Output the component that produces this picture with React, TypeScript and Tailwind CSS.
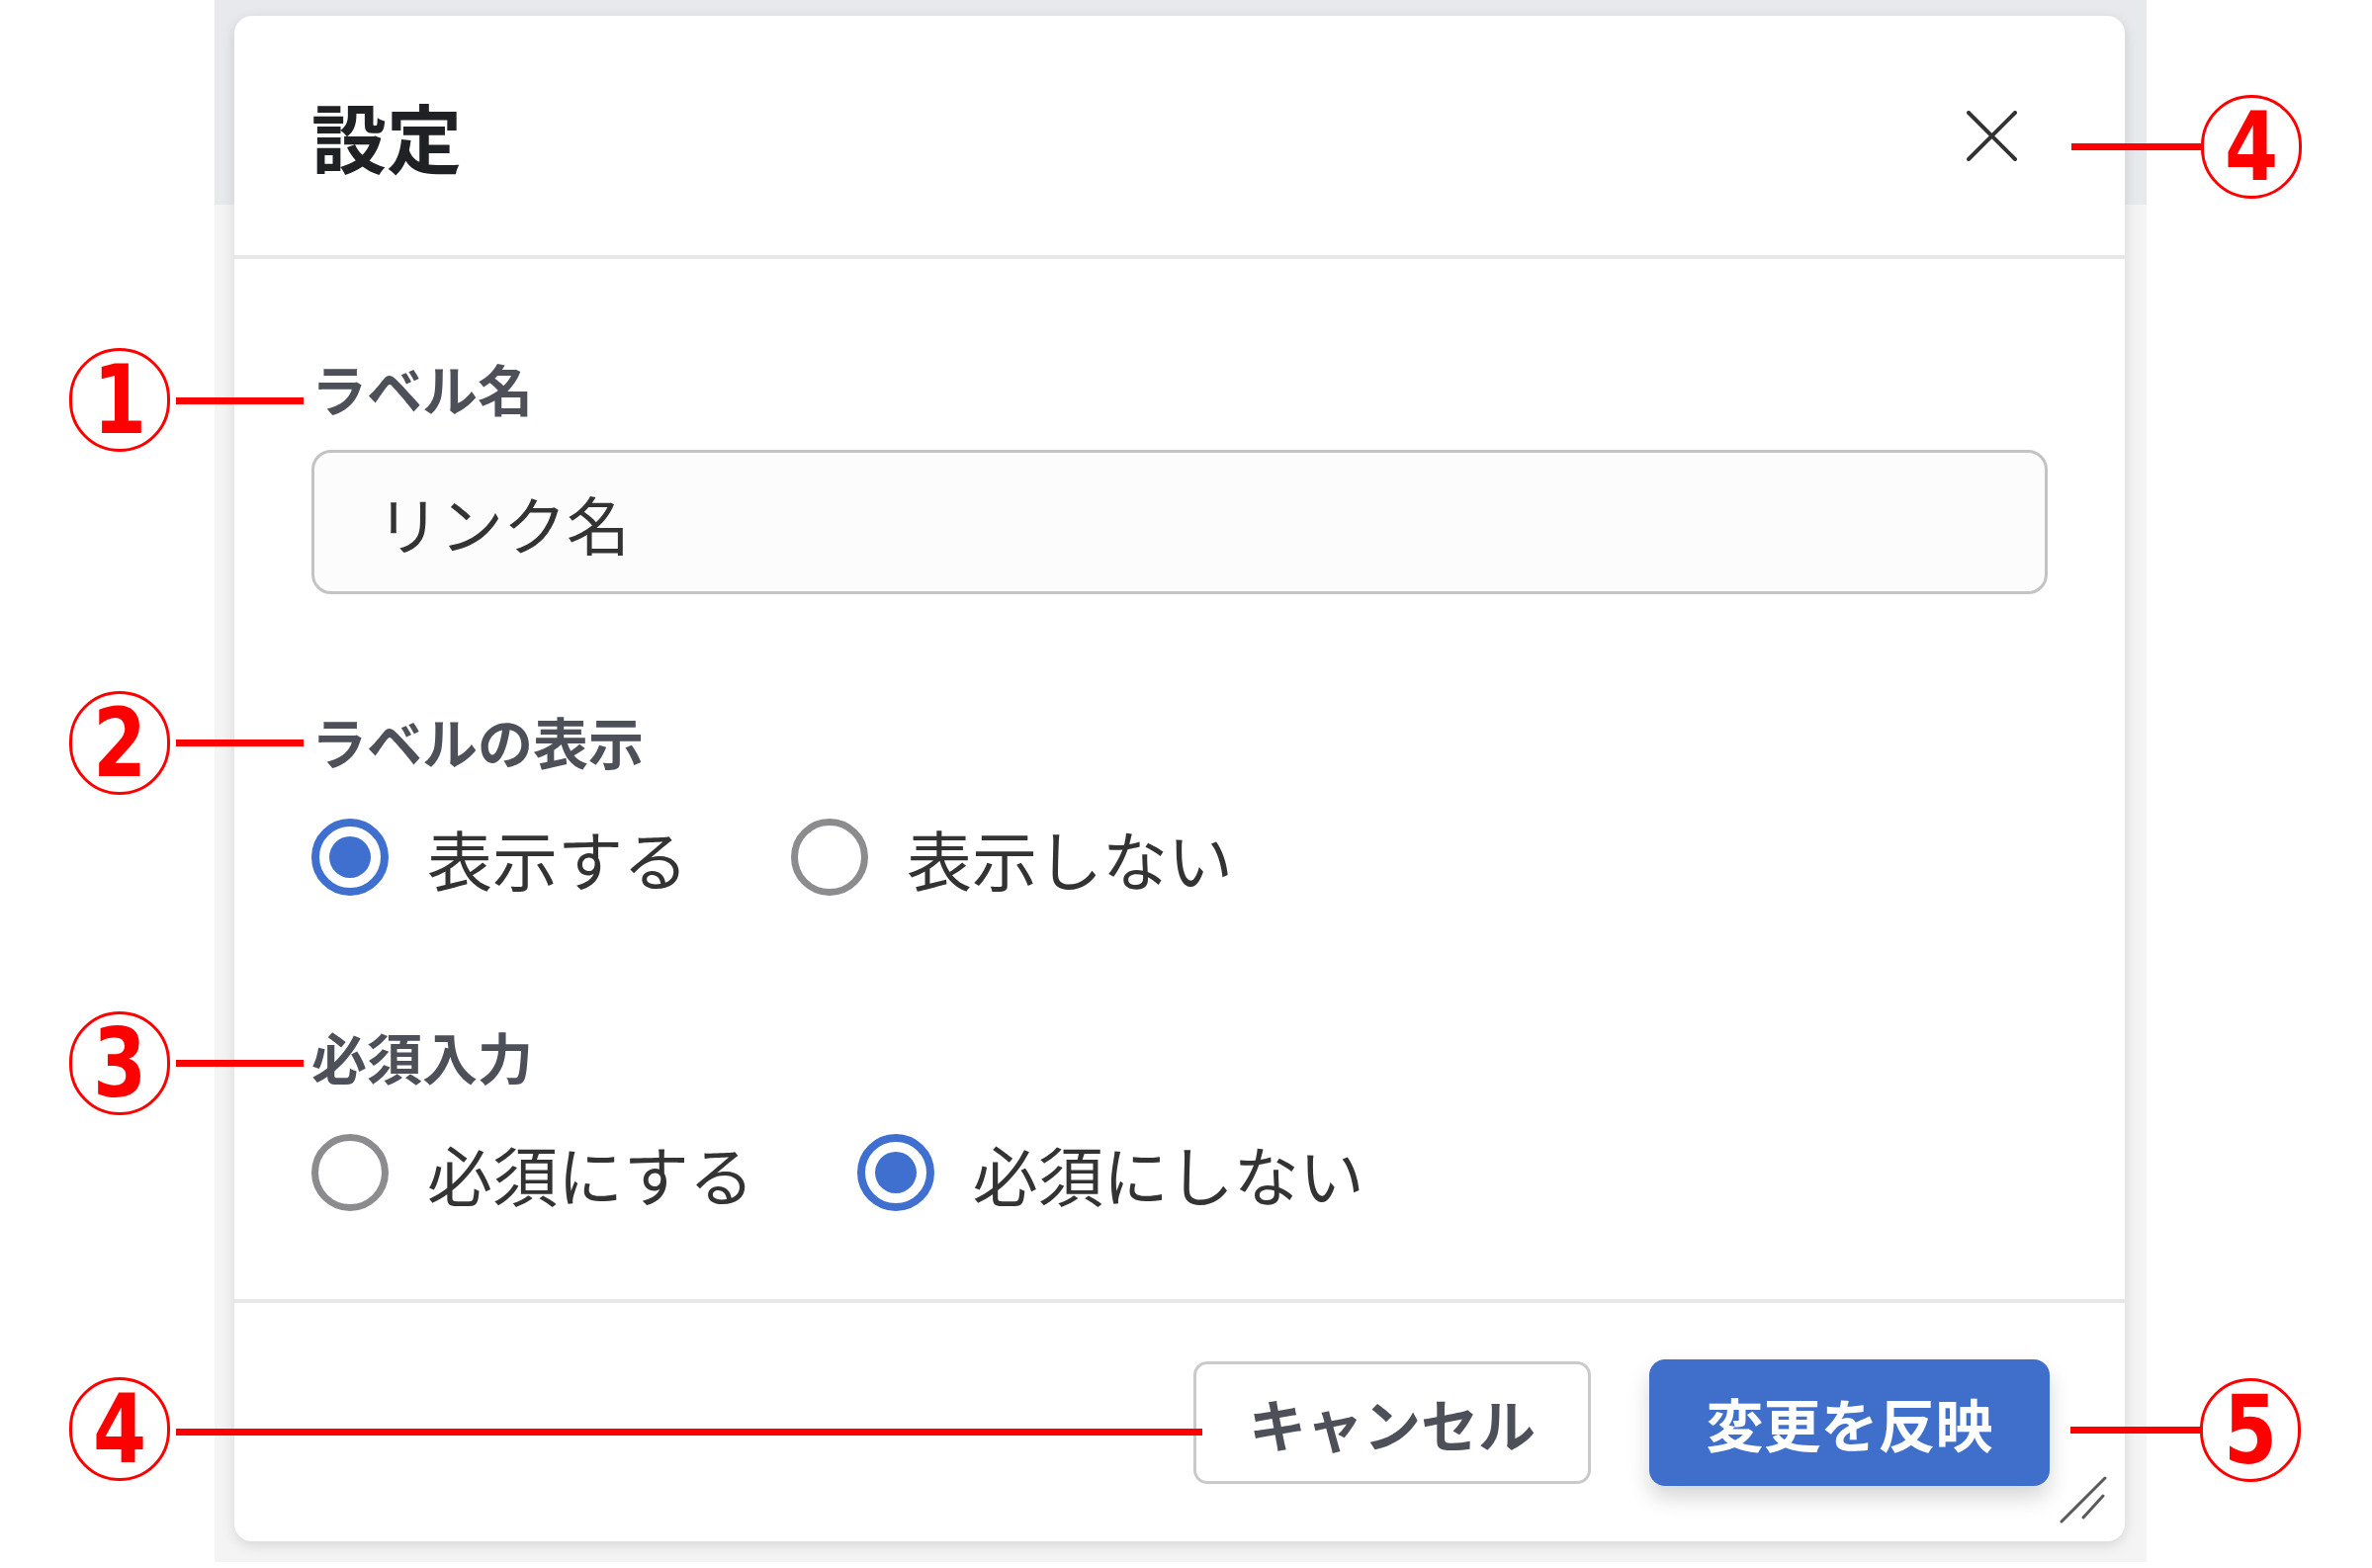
import type { ReactNode } from "react";

const jp = "font-['Noto_Sans_CJK_JP','Noto_Sans',sans-serif]";

function Radio({ checked }: { checked: boolean }) {
  if (checked) {
    return (
      <span className="flex h-[78px] w-[78px] shrink-0 items-center justify-center rounded-full border-[8px] border-[#3f6fcf]">
        <span className="h-[42px] w-[42px] rounded-full bg-[#3f6fcf]" />
      </span>
    );
  }
  return <span className="h-[78px] w-[78px] shrink-0 rounded-full border-[7px] border-[#8c8c8e]" />;
}

function Option({ label, checked }: { label: string; checked: boolean }) {
  return (
    <label className="flex items-center gap-[39px]">
      <Radio checked={checked} />
      <span className="text-[66px] leading-none text-[#333333]">{label}</span>
    </label>
  );
}

function FieldLabel({ children }: { children: ReactNode }) {
  return <div className="h-[56px] text-[56px] font-bold leading-none text-[#4d5058]">{children}</div>;
}

// red circled numbers used as annotations on the screenshot
function Marker({ n, className }: { n: string; className: string }) {
  return (
    <div
      className={`absolute flex h-[105px] w-[102px] items-center justify-center rounded-full border-[3px] border-[#ff0000] text-[96px] font-bold leading-none text-[#ff0000] font-['DejaVu_Sans_Condensed','DejaVu_Sans',sans-serif] ${className}`}
    >
      <span className="scale-x-90">{n}</span>
    </div>
  );
}

export default function App() {
  return (
    <div className={`relative flex h-[1586px] w-[2399px] overflow-hidden bg-white ${jp}`}>
      <div className="w-[217px] shrink-0" />

      {/* dimmed page behind the dialog */}
      <div className="h-[1580px] w-[1954px] shrink-0 bg-[linear-gradient(to_bottom,#e8e9ed_207px,#f4f4f5_207px)] pl-[20px] pt-[16px]">
        <div className="relative flex w-[1912px] flex-col rounded-[18px] bg-white shadow-[0_4px_14px_rgba(0,0,0,0.12)]">
          <div className="flex h-[246px] items-center justify-between border-b-[4px] border-[#e7e7e9] pl-[78px] pr-[109px]">
            <h1 className="text-[76px] font-bold leading-none text-[#202124]">設定</h1>
            <button className="h-[51px] w-[51px]">
              <svg viewBox="0 0 51 51" className="h-[51px] w-[51px]">
                <path d="M2 2 L49 49 M49 2 L2 49" stroke="#333333" strokeWidth="4" strokeLinecap="round" />
              </svg>
            </button>
          </div>

          <div className="flex flex-col px-[78px] pb-[89px] pt-[102px]">
            <FieldLabel>ラベル名</FieldLabel>
            <div className="mt-[35px] flex h-[146px] items-center rounded-[20px] border-[3px] border-[#c3c3c6] bg-[#fcfcfd] pl-[63px] text-[64px] leading-none text-[#333333]">
              リンク名
            </div>

            <div className="mt-[120px]">
              <FieldLabel>ラベルの表示</FieldLabel>
            </div>
            <div className="mt-[51px] flex items-center gap-[104px]">
              <Option label="表示する" checked />
              <Option label="表示しない" checked={false} />
            </div>

            <div className="mt-[134px]">
              <FieldLabel>必須入力</FieldLabel>
            </div>
            <div className="mt-[51px] flex items-center gap-[104px]">
              <Option label="必須にする" checked={false} />
              <Option label="必須にしない" checked />
            </div>
          </div>

          <div className="flex h-[245px] items-center justify-end gap-[59px] border-t-[4px] border-[#e7e7e9] pr-[76px]">
            <button className="h-[124px] w-[402px] rounded-[14px] border-[3px] border-[#cacacc] bg-white text-[58px] font-bold leading-none text-[#4d5058]">
              キャンセル
            </button>
            <button className="h-[128px] w-[405px] rounded-[16px] bg-[#3f6ecb] text-[58px] font-bold leading-none text-white shadow-[0_12px_22px_rgba(0,0,0,0.16)]">
              変更を反映
            </button>
          </div>

          {/* resize handle */}
          <svg viewBox="0 0 48 48" className="absolute bottom-[18px] right-[18px] h-[48px] w-[48px]">
            <path d="M2 46 L46 2 M24 42 L44 20" stroke="#5a5a5c" strokeWidth="3" strokeLinecap="round" />
          </svg>
        </div>
      </div>

      {/* annotations */}
      <Marker n="1" className="left-[70px] top-[352px]" />
      <Marker n="2" className="left-[70px] top-[699px]" />
      <Marker n="3" className="left-[70px] top-[1023px]" />
      <Marker n="4" className="left-[70px] top-[1393px]" />
      <Marker n="4" className="left-[2226px] top-[96px]" />
      <Marker n="5" className="left-[2225px] top-[1394px]" />

      <div className="absolute left-[178px] top-[402px] h-[7px] w-[129px] bg-[#ff0000]" />
      <div className="absolute left-[178px] top-[748px] h-[7px] w-[129px] bg-[#ff0000]" />
      <div className="absolute left-[178px] top-[1072px] h-[7px] w-[129px] bg-[#ff0000]" />
      <div className="absolute left-[178px] top-[1445px] h-[7px] w-[1038px] bg-[#ff0000]" />
      <div className="absolute left-[2095px] top-[145px] h-[7px] w-[131px] bg-[#ff0000]" />
      <div className="absolute left-[2094px] top-[1443px] h-[7px] w-[132px] bg-[#ff0000]" />
    </div>
  );
}
